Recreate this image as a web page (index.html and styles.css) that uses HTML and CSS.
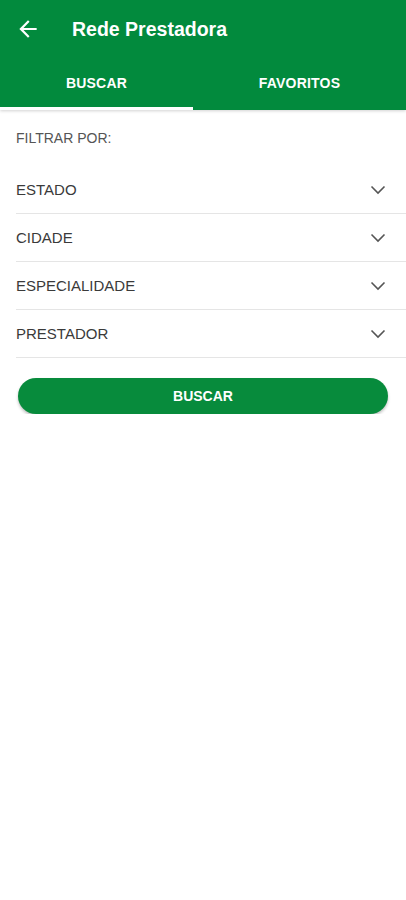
FILE: index.html
```html
<!DOCTYPE html>
<html lang="pt-BR">
<head>
    <meta charset="UTF-8">
    <meta name="viewport" content="width=device-width, initial-scale=1.0">
    <title>Rede Prestadora</title>
    <link rel="stylesheet" href="styles.css">
</head>
<body>
    <header class="appbar">
        <div class="toolbar">
            <button class="back" type="button" aria-label="Voltar">
                <svg width="26" height="26" viewBox="0 0 24 24"><path d="M20 11H7.83l5.59-5.59L12 4l-8 8 8 8 1.41-1.41L7.83 13H20v-2z" fill="#fff"/></svg>
            </button>
            <h1>Rede Prestadora</h1>
        </div>
        <nav class="tabs">
            <a class="tab active" href="#">BUSCAR</a>
            <a class="tab" href="#">FAVORITOS</a>
        </nav>
    </header>

    <main class="content">
        <p class="filter-label">FILTRAR POR:</p>

        <div class="select-row"><span>ESTADO</span><svg class="chev" width="16" height="10" viewBox="0 0 16 10"><path d="M1.5 1.5L8 8l6.5-6.5" fill="none" stroke="#555" stroke-width="1.6"/></svg></div>
        <div class="select-row"><span>CIDADE</span><svg class="chev" width="16" height="10" viewBox="0 0 16 10"><path d="M1.5 1.5L8 8l6.5-6.5" fill="none" stroke="#555" stroke-width="1.6"/></svg></div>
        <div class="select-row"><span>ESPECIALIDADE</span><svg class="chev" width="16" height="10" viewBox="0 0 16 10"><path d="M1.5 1.5L8 8l6.5-6.5" fill="none" stroke="#555" stroke-width="1.6"/></svg></div>
        <div class="select-row"><span>PRESTADOR</span><svg class="chev" width="16" height="10" viewBox="0 0 16 10"><path d="M1.5 1.5L8 8l6.5-6.5" fill="none" stroke="#555" stroke-width="1.6"/></svg></div>

        <button class="search-btn" type="button">BUSCAR</button>
    </main>
</body>
</html>
```

FILE: styles.css
```css
body {
    margin: 0;
    font-family: "Liberation Sans", Arial, sans-serif;
    background: #fff;
    color: #333;
}
.appbar {
    background: #028a3d;
    color: #fff;
    box-shadow: 0 1px 3px rgba(0,0,0,0.18);
}
.toolbar {
    height: 56px;
    display: flex;
    align-items: center;
    padding-top: 2px;
    box-sizing: border-box;
}
.back {
    background: none;
    border: none;
    padding: 0;
    margin-left: 15px;
    width: 26px;
    height: 26px;
    display: flex;
}
.toolbar h1 {
    margin: 0 0 0 31px;
    font-size: 19.5px;
    font-weight: bold;
}
.tabs {
    display: flex;
    height: 54px;
}
.tab {
    display: flex;
    align-items: center;
    justify-content: center;
    color: #fff;
    text-decoration: none;
    font-size: 14px;
    font-weight: bold;
    letter-spacing: 0.2px;
    box-sizing: border-box;
    border-bottom: 3px solid transparent;
    padding-top: 3px;
}
.tab:first-child {
    width: 193px;
}
.tab:last-child {
    flex: 1;
}
.tab.active {
    border-bottom-color: #fff;
}
.content {
    padding: 18px 0 0 16px;
}
.filter-label {
    margin: 0 0 18px;
    font-size: 14px;
    line-height: 20px;
    color: #555;
}
.select-row {
    height: 47px;
    border-bottom: 1px solid #e5e5e5;
    display: flex;
    align-items: center;
    justify-content: space-between;
    padding-right: 20px;
    font-size: 15px;
    color: #3a3a3a;
}
.search-btn {
    display: block;
    margin: 20px 0 0 2px;
    width: 370px;
    height: 36px;
    border: none;
    border-radius: 18px;
    background: #078b3c;
    color: #fff;
    font-family: "Liberation Sans", Arial, sans-serif;
    font-size: 14px;
    font-weight: bold;
    box-shadow: 0 2px 3px rgba(0,0,0,0.25);
}
```
